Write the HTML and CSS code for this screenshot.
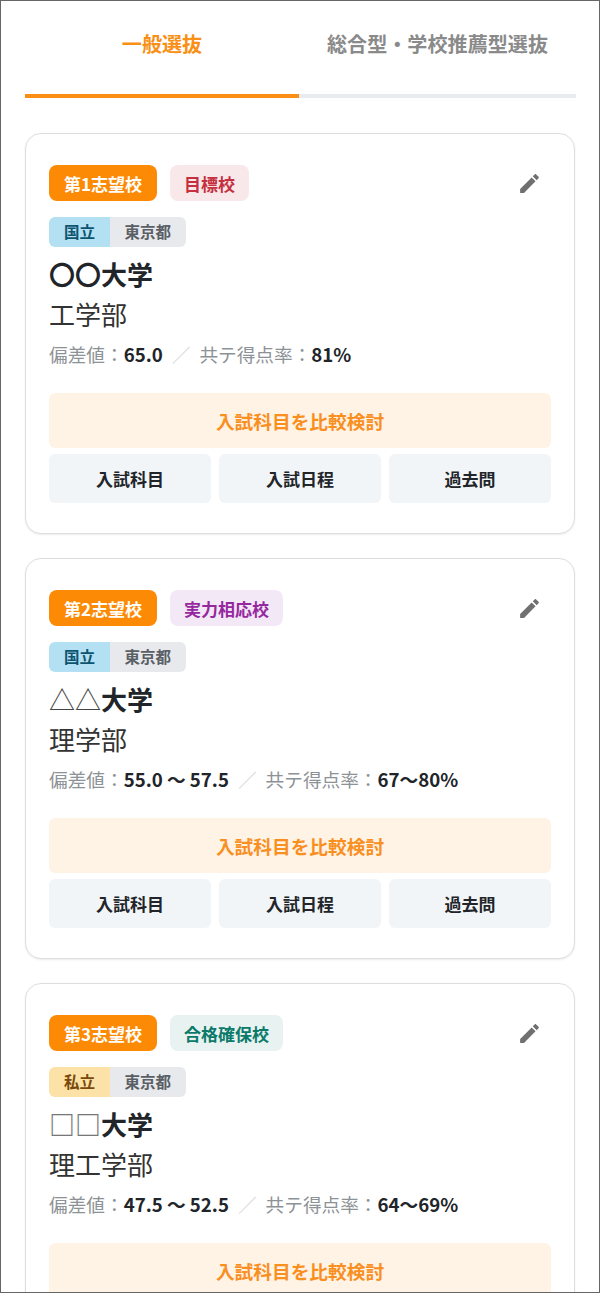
FILE: index.html
```html
<!DOCTYPE html>
<html lang="ja">
<head>
<meta charset="utf-8">
<title>志望校</title>
<link rel="stylesheet" href="styles.css">
</head>
<body>
<main class="frame">
  <nav class="tabs">
    <a class="tab tab-active">一般選抜</a>
    <a class="tab tab-other">総合型・学校推薦型選抜</a>
  </nav>

  <article class="card">
    <header class="card-head">
      <span class="badge badge-rank">第1志望校</span>
      <span class="badge badge-target">目標校</span>
      <svg class="edit" viewBox="0 0 24 24"><path d="M3 17.25V21h3.75L17.81 9.94l-3.75-3.75L3 17.25zM20.71 7.04c.39-.39.39-1.02 0-1.41l-2.34-2.34c-.39-.39-1.02-.39-1.41 0l-1.83 1.83 3.75 3.75 1.83-1.83z"/></svg>
    </header>
    <div class="tags"><span class="tag tag-national">国立</span><span class="tag tag-pref">東京都</span></div>
    <h2 class="name">〇〇大学</h2>
    <p class="dept">工学部</p>
    <p class="score">偏差値：<b>65.0</b><span class="sep">／</span>共テ得点率：<b>81%</b></p>
    <a class="compare">入試科目を比較検討</a>
    <div class="links"><a class="link">入試科目</a><a class="link">入試日程</a><a class="link">過去問</a></div>
  </article>

  <article class="card">
    <header class="card-head">
      <span class="badge badge-rank">第2志望校</span>
      <span class="badge badge-match">実力相応校</span>
      <svg class="edit" viewBox="0 0 24 24"><path d="M3 17.25V21h3.75L17.81 9.94l-3.75-3.75L3 17.25zM20.71 7.04c.39-.39.39-1.02 0-1.41l-2.34-2.34c-.39-.39-1.02-.39-1.41 0l-1.83 1.83 3.75 3.75 1.83-1.83z"/></svg>
    </header>
    <div class="tags"><span class="tag tag-national">国立</span><span class="tag tag-pref">東京都</span></div>
    <h2 class="name"><span class="mark">△△</span>大学</h2>
    <p class="dept">理学部</p>
    <p class="score">偏差値：<b>55.0 〜 57.5</b><span class="sep">／</span>共テ得点率：<b>67〜80%</b></p>
    <a class="compare">入試科目を比較検討</a>
    <div class="links"><a class="link">入試科目</a><a class="link">入試日程</a><a class="link">過去問</a></div>
  </article>

  <article class="card">
    <header class="card-head">
      <span class="badge badge-rank">第3志望校</span>
      <span class="badge badge-safe">合格確保校</span>
      <svg class="edit" viewBox="0 0 24 24"><path d="M3 17.25V21h3.75L17.81 9.94l-3.75-3.75L3 17.25zM20.71 7.04c.39-.39.39-1.02 0-1.41l-2.34-2.34c-.39-.39-1.02-.39-1.41 0l-1.83 1.83 3.75 3.75 1.83-1.83z"/></svg>
    </header>
    <div class="tags"><span class="tag tag-private">私立</span><span class="tag tag-pref">東京都</span></div>
    <h2 class="name"><span class="mark-box">□□</span>大学</h2>
    <p class="dept">理工学部</p>
    <p class="score">偏差値：<b>47.5 〜 52.5</b><span class="sep">／</span>共テ得点率：<b>64〜69%</b></p>
    <a class="compare">入試科目を比較検討</a>
  </article>
</main>
</body>
</html>
```
FILE: styles.css
```css
* { box-sizing: border-box; }
html, body { margin: 0; height: 100%; overflow: hidden; background: #fff; }
body { font-family: "Noto Sans CJK JP", "Noto Sans", sans-serif; color: #212529; }

.frame {
  height: 1293px;
  border: 1px solid #666;
  padding: 0 24px;
  overflow: hidden;
  background: #fff;
}

.tabs { display: flex; height: 97px; margin-right: -1px; margin-bottom: 35px; }
.tab {
  display: flex;
  align-items: center;
  justify-content: center;
  padding-bottom: 8px;
  font-size: 20.1px;
  font-weight: 700;
  color: #8a8a8a;
  border-bottom: 4px solid #e9ecef;
}
.tab-active { width: 274px; color: #f98f14; border-bottom-color: #f98f14; }
.tab-other { flex: 1; }

.card {
  height: 401px;
  margin-bottom: 24px;
  padding: 31px 23px 0;
  border: 1px solid #dcdfe2;
  border-radius: 16px;
  box-shadow: 0 1px 2px rgba(0, 0, 0, .08);
  background: #fff;
}

.card-head { display: flex; align-items: center; gap: 13px; height: 36px; }
.badge {
  display: flex;
  align-items: center;
  height: 36px;
  padding: 0 14px;
  border-radius: 8px;
  font-size: 17px;
  font-weight: 700;
  white-space: nowrap;
}
.badge-rank { background: #fd8a04; color: #fff; padding: 0 15px; }
.badge-target { background: #f9e8ea; color: #c5303f; }
.badge-match { background: #f3e9f6; color: #96289f; }
.badge-safe { background: #e7f2f1; color: #0b7a6a; }
.edit { width: 25px; height: 25px; margin-left: auto; margin-right: 9px; fill: #707070; }

.tags { display: flex; margin-top: 16px; height: 30px; }
.tag {
  display: flex;
  align-items: center;
  padding: 0 15px;
  font-size: 15.5px;
  font-weight: 700;
  line-height: 1;
}
.tag-national { background: #b3e0f2; color: #0d5470; border-radius: 6px 0 0 6px; }
.tag-private { background: #fde2a8; color: #7a4a0a; border-radius: 6px 0 0 6px; }
.tag-pref { padding: 0 14.5px; background: #e7e9ec; color: #5a5f66; border-radius: 0 6px 6px 0; }

.name { margin: 8px 0 0; height: 38px; font-size: 26px; line-height: 38px; font-weight: 700; color: #212529; }
.mark { font-weight: 400; color: #444; }
.mark-box { font-weight: 700; color: #777; }
.dept { margin: 2px 0 0; height: 38px; font-size: 26px; line-height: 38px; font-weight: 400; color: #333; }
.score { margin: 6px 0 0; height: 30px; font-size: 18.67px; line-height: 30px; color: #8d9296; }
.score b { color: #212529; font-weight: 700; }
.sep { margin: 0 9px; color: #d5d7d9; }

.compare {
  display: flex;
  align-items: center;
  justify-content: center;
  height: 55px;
  margin-top: 24px;
  border-radius: 6px;
  background: #fff3e6;
  color: #f98f1e;
  font-size: 18.7px;
  font-weight: 700;
}
.links { display: grid; grid-template-columns: repeat(3, 1fr); gap: 8px; margin-top: 6px; }
.link {
  display: flex;
  align-items: center;
  justify-content: center;
  height: 49px;
  border-radius: 6px;
  background: #f2f5f8;
  color: #212529;
  font-size: 17px;
  font-weight: 700;
}
```
